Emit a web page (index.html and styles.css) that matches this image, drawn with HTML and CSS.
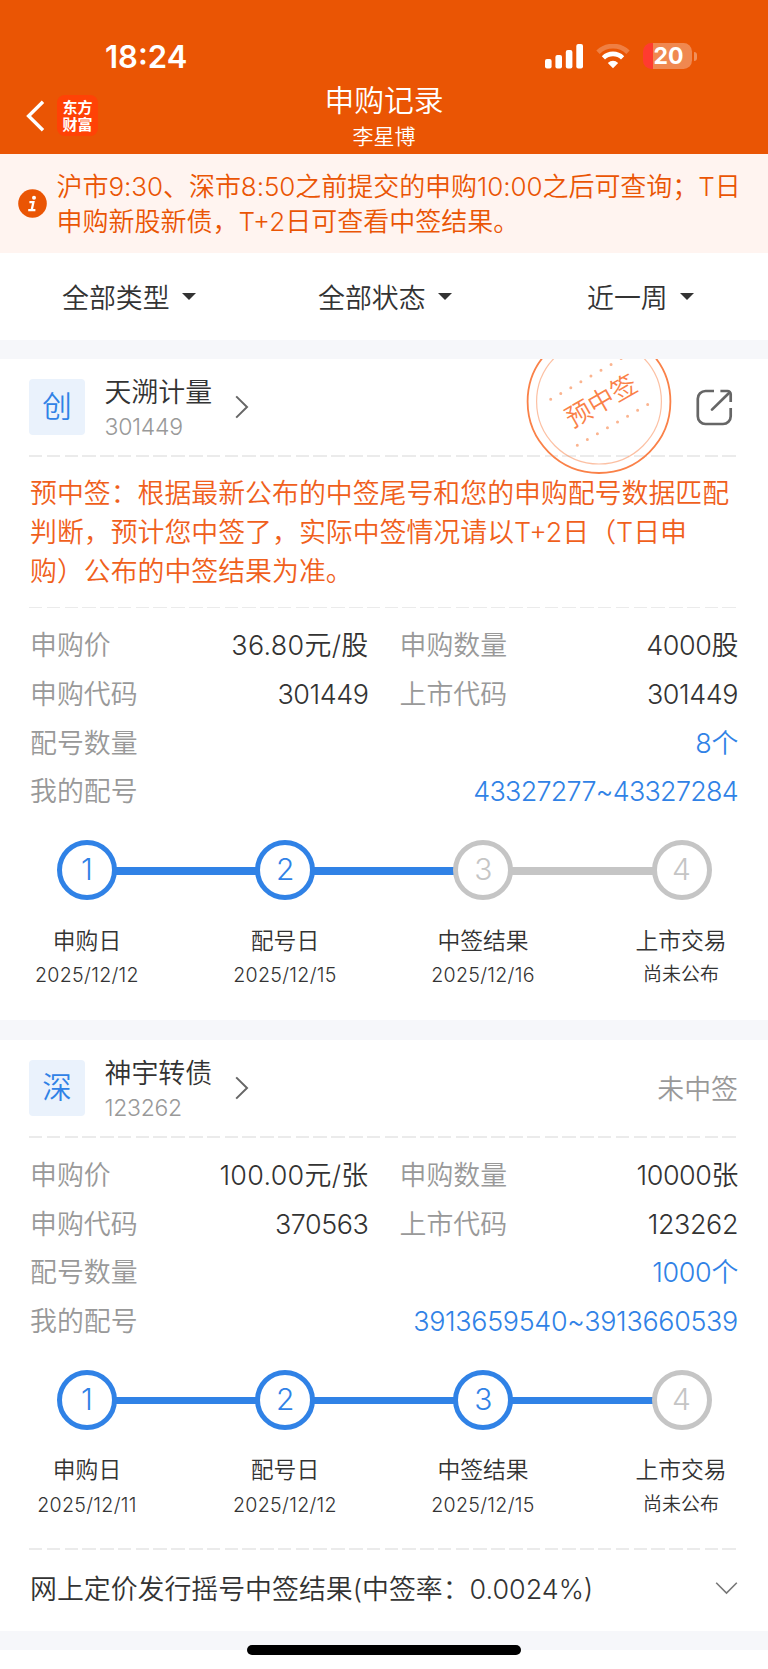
FILE: index.html
```html
<!DOCTYPE html>
<html lang="zh-CN">
<head>
<meta charset="utf-8">
<title>申购记录</title>
<link rel="stylesheet" href="styles.css">
</head>
<body>
<div class="screen">
  <header class="top">
    <div class="status">
      <div class="clock">18:24</div>
      <div class="indicators">
        <svg class="signal" width="38" height="25" viewBox="0 0 38 25" fill="#fff"><rect x="0" y="15" width="6.6" height="9.5" rx="2"/><rect x="10.4" y="11" width="6.6" height="13.5" rx="2"/><rect x="20.8" y="6" width="6.6" height="18.5" rx="2"/><rect x="31.3" y="0" width="6.7" height="24.5" rx="2"/></svg>
        <svg class="wifi" width="34" height="25" viewBox="0 0 34 25" fill="none"><path d="M2 8.2A21.5 21.5 0 0 1 32 8.2" stroke="#fff" stroke-opacity=".25" stroke-width="4.8"/><path d="M7.4 13.8A13.8 13.8 0 0 1 26.6 13.8" stroke="#fff" stroke-width="4.6"/><path d="M17 24.3L11.8 19Q17 14.4 22.2 19Z" fill="#fff"/></svg>
        <div class="battery"><span>20</span></div>
        <i class="nub"></i>
      </div>
    </div>
    <div class="nav">
      <div class="nav-side">
        <svg class="back" width="19" height="32" viewBox="0 0 19 32" fill="none" stroke="#fff" stroke-width="3.4"><path d="M17 1.8L2.6 16L17 30.2"/></svg>
        <div class="logo">东方<br>财富</div>
      </div>
      <div class="nav-title"><h1>申购记录</h1><p>李星博</p></div>
      <div class="nav-side"></div>
    </div>
  </header>

  <div class="notice">
    <svg width="29" height="29" viewBox="0 0 29 29"><circle cx="14.5" cy="14.5" r="14.3" fill="#ea5504"/><circle cx="16" cy="8.8" r="2" fill="#fff"/><path d="M11.4 13.2H15.4L13.7 21M10.2 21.2H17.4" fill="none" stroke="#fff" stroke-width="2.3"/></svg>
    <p><span class="n1">沪市9:30、深市8:50之前提交的申购10:00之后可查询；T日</span><br><span class="n2">申购新股新债，T+2日可查看中签结果。</span></p>
  </div>

  <div class="filters">
    <div class="filter">全部类型<i></i></div>
    <div class="filter">全部状态<i></i></div>
    <div class="filter">近一周<i></i></div>
  </div>
  <div class="band"></div>

  <section class="card first">
    <svg class="stamp" width="146" height="116" viewBox="526 359 146 116">
      <g fill="none" stroke="#fa8148"><circle cx="599" cy="401.6" r="71.4" stroke-width="1.8"/><circle cx="599" cy="401.6" r="62.4" stroke-width="1.2" stroke-opacity=".5"/></g>
      <g stroke="#fbb48f" stroke-width="3" stroke-linecap="round" stroke-dasharray="0 11.62"><path d="M550.7 399.3L621.8 358.2"/><path d="M577.3 445.3L648.2 404.2"/></g>
      <text x="601" y="410.3" text-anchor="middle" transform="rotate(-30 601 400.7)">预中签</text>
    </svg>
    <div class="head">
      <div class="badge">创</div>
      <div class="name"><b>天溯计量</b><span>301449</span></div>
      <svg class="go" width="14" height="24" viewBox="0 0 14 24" fill="none" stroke="#666" stroke-width="2"><path d="M1.2 1.4L12 12L1.2 22.6"/></svg>
      <svg class="share" width="37" height="37" viewBox="0 0 37 37" fill="none" stroke="#666" stroke-width="2.7" stroke-linecap="butt" stroke-linejoin="round"><path d="M18 2H9.5A7.7 7.7 0 0 0 1.8 9.7V27.3A7.7 7.7 0 0 0 9.5 35H27A7.7 7.7 0 0 0 34.7 27.3V19M24.4 2H31.5A3.2 3.2 0 0 1 34.7 5.2V13"/><path d="M33 4L16 20.6" stroke-linecap="round"/></svg>
    </div>
    <div class="dash"></div>
    <p class="warn">预中签：根据最新公布的中签尾号和您的申购配号数据匹配<br>判断，预计您中签了，实际中签情况请以T+2日（T日申<br>购）公布的中签结果为准。</p>
    <div class="dash thin"></div>
    <div class="rows">
      <div class="row"><div class="pair"><span>申购价</span><em class="price">36.80元/股</em></div><div class="pair"><span>申购数量</span><em>4000股</em></div></div>
      <div class="row"><div class="pair"><span>申购代码</span><em>301449</em></div><div class="pair"><span>上市代码</span><em>301449</em></div></div>
      <div class="row"><div class="pair"><span>配号数量</span><em class="link">8个</em></div></div>
      <div class="row"><div class="pair"><span>我的配号</span><em class="link tight">43327277~43327284</em></div></div>
    </div>
    <div class="track"><b class="on">1</b><i class="on"></i><b class="on">2</b><i class="on"></i><b>3</b><i></i><b>4</b></div>
    <div class="steps">
      <div><b>申购日</b><span>2025/12/12</span></div>
      <div><b>配号日</b><span>2025/12/15</span></div>
      <div><b>中签结果</b><span>2025/12/16</span></div>
      <div><b>上市交易</b><span class="cn">尚未公布</span></div>
    </div>
  </section>
  <div class="band"></div>

  <section class="card second">
    <div class="head">
      <div class="badge">深</div>
      <div class="name"><b>神宇转债</b><span>123262</span></div>
      <svg class="go" width="14" height="24" viewBox="0 0 14 24" fill="none" stroke="#666" stroke-width="2"><path d="M1.2 1.4L12 12L1.2 22.6"/></svg>
      <div class="state">未中签</div>
    </div>
    <div class="dash"></div>
    <div class="rows">
      <div class="row"><div class="pair"><span>申购价</span><em class="price">100.00元/张</em></div><div class="pair"><span>申购数量</span><em>10000张</em></div></div>
      <div class="row"><div class="pair"><span>申购代码</span><em>370563</em></div><div class="pair"><span>上市代码</span><em>123262</em></div></div>
      <div class="row"><div class="pair"><span>配号数量</span><em class="link">1000个</em></div></div>
      <div class="row"><div class="pair"><span>我的配号</span><em class="link">3913659540~3913660539</em></div></div>
    </div>
    <div class="track"><b class="on">1</b><i class="on"></i><b class="on">2</b><i class="on"></i><b class="on">3</b><i class="on"></i><b>4</b></div>
    <div class="steps">
      <div><b>申购日</b><span>2025/12/11</span></div>
      <div><b>配号日</b><span>2025/12/12</span></div>
      <div><b>中签结果</b><span>2025/12/15</span></div>
      <div><b>上市交易</b><span class="cn">尚未公布</span></div>
    </div>
    <div class="dash"></div>
    <div class="result"><span>网上定价发行摇号中签结果(中签率：0.0024%)</span>
      <svg width="23" height="14" viewBox="0 0 23 14" fill="none" stroke="#777" stroke-width="1.6"><path d="M1.2 1.8L11.5 12L21.8 1.8"/></svg>
    </div>
  </section>
  <div class="band"></div>
  <div class="home"></div>
</div>
</body>
</html>
```
FILE: styles.css
```css
* { box-sizing: border-box; }
body, h1, p { margin: 0; }
b, em, i { font-weight: inherit; font-style: normal; }
body {
  background: #fff;
  color: #333;
  font-family: Inter, "Noto Sans CJK SC", sans-serif;
  font-weight: 350;
  font-size: 26.9px;
}
svg { display: block; flex: none; }
.screen { position: relative; width: 768px; height: 1669px; overflow: hidden; }

.top { height: 153.6px; background: #ea5504; color: #fff; }
.status { display: flex; justify-content: space-between; height: 82px; padding: 37px 71px 0 105px; }
.clock { font-size: 31px; line-height: 40px; font-weight: 600; }
.indicators { display: flex; align-items: center; height: 38px; }
.wifi { margin-left: 13px; }
.battery {
  width: 49px; height: 26.5px; margin-left: 13px; padding-left: 2px; border-radius: 8.5px;
  background: linear-gradient(to right, #ff3b30 10px, rgba(255, 255, 255, .3) 10px);
  font-size: 23px; line-height: 27px; font-weight: 700; text-align: center;
}
.nub { width: 3px; height: 9px; margin-left: 2px; border-radius: 0 4px 4px 0; background: rgba(255, 255, 255, .35); }
.nav { display: flex; justify-content: space-between; }
.nav-side { display: flex; width: 200px; padding: 13px 0 0 26px; }
.back { margin-top: 5px; }
.logo {
  width: 41px; height: 41px; margin-left: 12px; padding-top: 3.5px; border-radius: 8px;
  background: #ff4206; text-align: center; white-space: nowrap;
  font: 700 15px/17.4px "Liberation Sans", "Noto Sans CJK SC", sans-serif;
}
.nav-title { text-align: center; }
.nav-title h1 { font-size: 29.8px; line-height: 37px; font-weight: 350; }
.nav-title p { font-size: 21px; line-height: 35px; }

.notice { display: flex; align-items: center; height: 99.4px; padding: 1px 0 0 17.5px; background: #fff4f0; color: #ea5504; }
.notice p { margin-left: 10px; font-size: 26px; line-height: 35.2px; white-space: nowrap; }
.n1 { letter-spacing: -.05px; }

.filters { display: flex; height: 87px; padding-left: 62px; }
.filter { display: flex; flex: none; align-items: center; width: 256px; }
.filter:nth-child(3) { padding-left: 13px; }
.filter i { margin-left: 12px; border: 7px solid transparent; border-top: 7.5px solid #333; border-bottom: 0; }
.band { height: 19.5px; background: #f6f7fa; }

.card { position: relative; padding: 0 30px; }
.first { height: 661px; }
.second { height: 591px; }
.head { display: flex; align-items: center; height: 96px; margin-left: -1px; }
.badge { width: 56px; height: 56px; border-radius: 4px; background: #eaf2fc; color: #3082e6; font-size: 29.5px; line-height: 55px; text-align: center; }
.name { display: flex; flex-direction: column; width: 130px; margin-left: 19.5px; padding-top: 6px; line-height: 35px; }
.name span { color: #999; font-size: 23px; letter-spacing: -.3px; }
.share { margin-left: auto; margin-right: 5px; }
.state { margin-left: auto; color: #999; }
.stamp { position: absolute; left: 526px; top: 0; }
.stamp text { font-size: 26px; fill: #fa8148; }
.dash { height: 2px; margin: 0 2px 0 -1px; background: repeating-linear-gradient(to right, #ebebeb 0 13.5px, transparent 13.5px 17.78px); }
.thin { height: 1.4px; }
.warn { padding: 17px 0 16.6px; color: #f0601c; line-height: 38.6px; white-space: nowrap; }
.rows { padding-top: 13px; }
.row { display: flex; gap: 31px; height: 48.7px; line-height: 48.2px; margin-right: 0; }
.pair { display: flex; flex: 1; justify-content: space-between; white-space: nowrap; }
.pair span { color: #999; }
.pair em { letter-spacing: -.4px; }
.pair .price { letter-spacing: .3px; }
.pair .link { color: #3082e6; letter-spacing: -.3px; }
.pair .tight { letter-spacing: -.7px; }
.track { display: flex; align-items: center; padding: 24.2px 26.5px 0 27px; }
.track b { width: 60px; height: 60px; border: 5.8px solid #c5c5c5; border-radius: 50%; color: #c5c5c5; font-size: 30px; line-height: 49px; text-align: center; }
.track i { flex: 1; height: 7.8px; margin: 1px -1px 0; background: #c5c5c5; }
.track b.on { border-color: #3082e6; color: #3082e6; }
.track i.on { background: #3082e6; }
.steps { display: flex; justify-content: space-between; padding-top: 23.5px; text-align: center; line-height: 34.2px; }
.steps div { display: flex; flex-direction: column; width: 114px; font-size: 22.8px; white-space: nowrap; }
.steps span { font-size: 19.6px; letter-spacing: .3px; }
.steps .cn { font-size: 19px; letter-spacing: 0; }
.second .steps { padding-bottom: 26.6px; }
.result { display: flex; align-items: center; justify-content: space-between; height: 75px; white-space: nowrap; }
.home { position: absolute; left: 247px; top: 1645px; width: 274px; height: 9.5px; border-radius: 5px; background: #000; }
```
